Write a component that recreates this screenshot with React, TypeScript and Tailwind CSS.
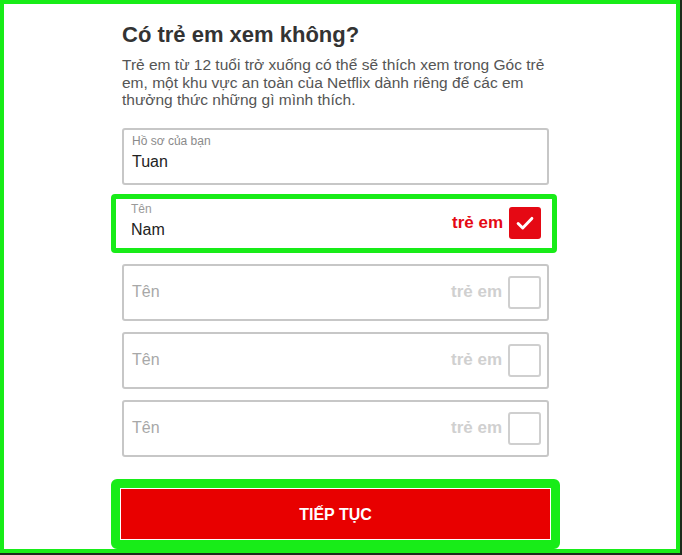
const font = { fontFamily: '"Liberation Sans", Arial, sans-serif' }

const Check = () => (
  <svg viewBox="0 0 24 24" className="w-[22px] h-[22px]" fill="none" stroke="white" strokeWidth={3.2} strokeLinecap="round" strokeLinejoin="round">
    <path d="M4.5 12.5l5 5L19.5 7" />
  </svg>
)

const EmptyRow = () => (
  <div className="mt-[11px] h-[57px] border-2 border-[#c7c7c7] rounded-[3px] flex items-center justify-between pl-[8px] pr-[6px]">
    <span className="text-[16px] text-[#a8a8a8]">Tên</span>
    <div className="flex items-center gap-[6px]">
      <span className="text-[17px] font-bold text-[#d0d0d0]">trẻ em</span>
      <div className="w-[33px] h-[33px] border-2 border-[#cfcfcf] rounded-[3px]" />
    </div>
  </div>
)

export default function App() {
  return (
    <div className="w-[682px] h-[555px] bg-[#1b2a1b] pr-[2px] pb-[2px]" style={font}>
      <div className="h-full border-4 border-[#18ec18] bg-white pl-[118px] pt-[18px]">
        <div className="w-[427px] flex flex-col">
          <h1 className="text-[22px] leading-[26px] font-bold text-[#333]">Có trẻ em xem không?</h1>
          <p className="mt-[8px] text-[15.5px] leading-[17.5px] text-[#555]">
            Trẻ em từ 12 tuổi trở xuống có thể sẽ thích xem trong Góc trẻ em, một khu vực an toàn của Netflix dành riêng để các em thưởng thức những gì mình thích.
          </p>

          <div className="mt-[19px] h-[57px] border-2 border-[#c7c7c7] rounded-[3px] pl-[8px] pt-[4px]">
            <div className="text-[12px] leading-[14px] text-[#8a8a8a]">Hồ sơ của bạn</div>
            <div className="mt-[4px] text-[16px] leading-[20px] text-[#222]">Tuan</div>
          </div>

          <div className="mt-[9px] -ml-[11px] w-[446px] h-[59px] border-[5px] border-[#18ec18] rounded-[4px] flex items-center justify-between pl-[15px] pr-[11px]">
            <div className="-mt-[4px]">
              <div className="text-[12px] leading-[14px] text-[#9a9a9a]">Tên</div>
              <div className="mt-[4px] text-[16px] leading-[20px] text-[#222]">Nam</div>
            </div>
            <div className="flex items-center gap-[6px]">
              <span className="text-[17px] font-bold text-[#e50914]">trẻ em</span>
              <div className="w-[32px] h-[32px] bg-[#e50914] rounded-[3px] flex items-center justify-center">
                <Check />
              </div>
            </div>
          </div>

          <EmptyRow />
          <EmptyRow />
          <EmptyRow />

          <div className="mt-[22px] -ml-[11px] w-[449px] h-[70px] border-[9px] border-[#18ec18] rounded-[6px] p-[1px] bg-white">
            <button className="w-full h-full pt-[2px] bg-[#e80000] text-white text-[16px] font-bold">
              TIẾP TỤC
            </button>
          </div>
        </div>
      </div>
    </div>
  )
}
